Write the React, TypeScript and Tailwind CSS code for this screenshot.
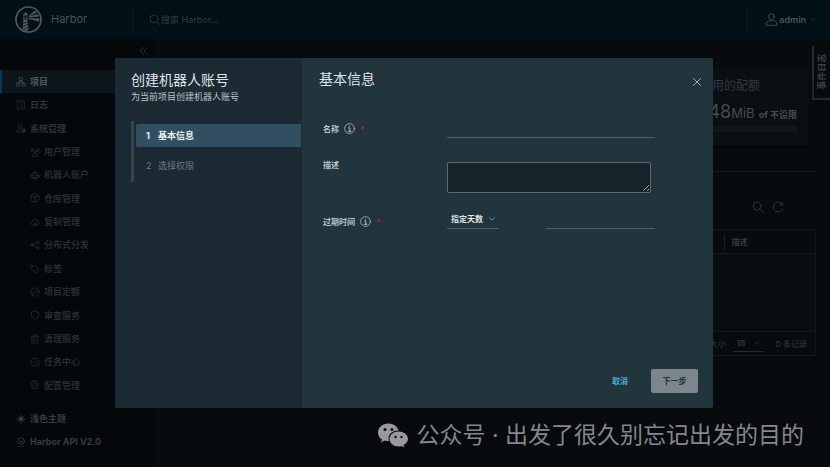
import type { ReactNode } from 'react';

const FONT = "font-['Inter','Noto_Sans_CJK_SC',sans-serif]";

type IconProps = { className?: string; children: ReactNode };

function Icon({ className = 'size-[10px]', children }: IconProps) {
  return (
    <svg
      viewBox="0 0 36 36"
      fill="none"
      stroke="currentColor"
      strokeWidth="2.4"
      strokeLinecap="round"
      strokeLinejoin="round"
      className={`shrink-0 ${className}`}
      aria-hidden="true"
    >
      {children}
    </svg>
  );
}

const SearchShape = (
  <>
    <circle cx="15" cy="15" r="12" />
    <path d="M24 24l10 10" />
  </>
);
const ChevronShape = <path d="M4 11l14 14 14-14" strokeWidth="4" />;

function Logo() {
  return (
    <svg viewBox="0 0 54 54" className="size-[27px] shrink-0" aria-hidden="true">
      <circle cx="27" cy="27" r="25" fill="none" stroke="#50585c" strokeWidth="3.4" />
      <path d="M16 17l5-5 5 5v2H16zM17 20h2v5h-2zM23 20h2v5h-2zM15 25h12v2H15zM17 28h8l2 20-6 2-6-3z" fill="#50585c" />
      <path d="M17 35l9-4M16 41l10-4M17 47l9-4" stroke="#02131a" strokeWidth="1.6" />
      <path d="M28 19l12-10 4 4-16 8zM28 21l18-5 2 5-20 2zM28 24l21 1-1 6-20-5z" fill="#50585c" />
    </svg>
  );
}

type NavItem = { label: string; icon: ReactNode; level: 0 | 1; active?: boolean };

const NAV: NavItem[] = [
  {
    label: '项目',
    level: 0,
    active: true,
    icon: <path d="M13 3h10v10H13zM3 23h10v10H3zM23 23h10v10H23zM18 13v5M8 23v-5h20v5" />,
  },
  {
    label: '日志',
    level: 0,
    icon: <path d="M6 3h24v30H6zM12 10h2M12 18h2M12 26h2M18 10h6M18 18h6M18 26h6" />,
  },
  {
    label: '系统管理',
    level: 0,
    icon: (
      <>
        <circle cx="15" cy="10" r="7" />
        <path d="M18 32H3v-6c3-5 8-6 14-5" />
        <circle cx="27" cy="27" r="5" strokeWidth="5" />
      </>
    ),
  },
  {
    label: '用户管理',
    level: 1,
    icon: (
      <>
        <circle cx="18" cy="16" r="5" />
        <circle cx="8" cy="9" r="4" />
        <circle cx="28" cy="9" r="4" />
        <path d="M9 32v-4c4-6 14-6 18 0v4zM2 22v-3c2-3 4-4 7-3M34 22v-3c-2-3-4-4-7-3" />
      </>
    ),
  },
  {
    label: '机器人账户',
    level: 1,
    icon: (
      <>
        <path d="M18 3v6M2 18v6M34 18v6M12 27h12" />
        <circle cx="18" cy="21" r="12" />
        <path d="M13 19v1M23 19v1" strokeWidth="4" />
      </>
    ),
  },
  { label: '仓库管理', level: 1, icon: <path d="M18 3l14 6v18l-14 6-14-6V9zM4 9l14 6 14-6M18 15v18" /> },
  {
    label: '复制管理',
    level: 1,
    icon: <path d="M24 29H9C1 29 1 18 9 18c0-12 17-14 19-2M34 18c1 6-3 11-9 11M17 23l5-4v8z" />,
  },
  {
    label: '分布式分发',
    level: 1,
    icon: (
      <>
        <circle cx="7" cy="18" r="4" />
        <circle cx="28" cy="8" r="4" />
        <circle cx="28" cy="28" r="4" />
        <path d="M11 16l13-6M11 20l13 6" />
      </>
    ),
  },
  {
    label: '标签',
    level: 1,
    icon: (
      <>
        <path d="M4 5h12l17 17-11 11L4 16z" />
        <path d="M10 11v0" strokeWidth="4" />
      </>
    ),
  },
  {
    label: '项目定额',
    level: 1,
    icon: (
      <>
        <circle cx="18" cy="18" r="15" />
        <path d="M9 29c0-8 4-12 10-12h13" />
      </>
    ),
  },
  { label: '审查服务', level: 1, icon: <path d="M18 3c4 3 8 4 13 4v10c0 8-6 13-13 16C11 30 5 25 5 17V7c5 0 9-1 13-4z" /> },
  { label: '清理服务', level: 1, icon: <path d="M4 8h28M13 8V3h10v5M7 8v25h22V8M14 14v13M22 14v13" /> },
  {
    label: '任务中心',
    level: 1,
    icon: <path d="M7 31C-2 20 4 5 18 5s20 15 11 26zM17 23l8-10M8 20h2" />,
  },
  {
    label: '配置管理',
    level: 1,
    icon: (
      <>
        <path d="M15 3h6l2 4 5-1 3 5-2 4 4 3-4 4 1 6-5 2-4-1-3 4-4-4-5 1-3-5 1-5-4-4 4-3-1-5 4-3 4 1z" />
        <circle cx="18" cy="18" r="6" />
      </>
    ),
  },
];

function Header() {
  return (
    <header className="flex h-[39px] shrink-0 items-center bg-[#010f16] text-[#4a5357]">
      <div className="flex w-[132px] items-center gap-[9px] pl-[15px]">
        <Logo />
        <span className="text-[11px]">Harbor</span>
      </div>
      <label className="flex h-[26px] flex-1 items-center border-l border-[#0b1a21] pl-4 text-[#323d42]">
        <Icon className="size-[12px]">{SearchShape}</Icon>
        <input
          aria-label="搜索"
          placeholder="搜索 Harbor..."
          className="w-32 bg-transparent text-[9px] outline-none placeholder:text-[#323d42]"
        />
      </label>
      <button className="flex h-[26px] items-center border-l border-[#0b1a21] pr-[14px] pl-[17px] text-[9px] font-semibold">
        <Icon className="mr-px size-[13px]">
          <circle cx="18" cy="10" r="8" />
          <path d="M3 33v-6c6-8 24-8 30 0v6z" />
        </Icon>
        admin
        <Icon className="ml-[5px] size-[5px]">{ChevronShape}</Icon>
      </button>
    </header>
  );
}

function Sidebar() {
  return (
    <nav className="flex w-[155px] shrink-0 flex-col bg-[#04080b] text-[9px] font-medium text-[#2d3336]">
      <div className="flex h-[31px] items-center justify-end px-[6px] pb-2">
        <button aria-label="收起" className="text-[#343b3f]">
          <Icon>
            <path d="M17 5L5 18l12 13M30 5L18 18l12 13" />
          </Icon>
        </button>
      </div>
      <div className="flex h-[327px] flex-col">
        {NAV.map((item) => (
          <a
            key={item.label}
            href="#"
            className={`flex flex-1 items-center gap-[4px] border-l-2 ${
              item.active ? 'border-[#06394e] bg-[#0c151a] text-[#50575b]' : 'border-transparent'
            } ${item.level === 0 ? 'pl-[14px] font-bold' : 'pl-[28px]'}`}
          >
            <Icon>{item.icon}</Icon>
            {item.label}
          </a>
        ))}
      </div>
      <div className="mt-[10px] flex flex-col font-bold text-[#363c3f]">
        <button className="flex h-[23px] items-center gap-[4px] pl-4">
          <Icon>
            <circle cx="18" cy="18" r="8" fill="currentColor" />
            <path d="M18 1v4M18 31v4M1 18h4M31 18h4M6 6l3 3M27 27l3 3M30 6l-3 3M9 27l-3 3" />
          </Icon>
          浅色主题
        </button>
        <a href="#" className="flex h-[23px] items-center gap-[4px] pl-4">
          <Icon>
            <circle cx="18" cy="15" r="12" />
            <path d="M9 34h18M8 9l9 9 9-8M12 24l6-6 9 5" />
          </Icon>
          Harbor API V2.0
        </a>
      </div>
    </nav>
  );
}

function ProjectPage() {
  return (
    <main className="flex min-w-0 flex-1 flex-col items-end bg-[#070b0e] pt-[31px] pr-[14px] text-[#343a3d]">
      <section className="mr-[7px] flex h-[78px] w-[220px] flex-col items-end rounded-sm border-b-2 border-[#020506] bg-[#090f12] px-3 pt-[7px]">
        <h2 className="w-[109px] text-[12px] leading-[18px]">已使用的配额</h2>
        <p className="mt-[6px] text-[9px] leading-[22px] font-bold whitespace-nowrap text-[#454b4e]">
          <span className="text-[18px] font-normal">48</span>
          <span className="mr-[2px] text-[13px] font-normal">MiB</span> of 不设限
        </p>
        <div className="h-[6px] w-full bg-[#10161a]" />
      </section>
      <div className="mt-[23px] w-full border-t border-[#11171a]" />
      <div className="mr-8 flex h-[57px] items-center gap-2 pt-[12px] text-[#343b3f]">
        <button aria-label="搜索记录">
          <Icon className="size-[12px]">{SearchShape}</Icon>
        </button>
        <button aria-label="刷新">
          <Icon className="size-[12px]">
            <path d="M31 11C22-3 4 4 4 18c0 16 21 20 27 6M32 3v9h-9" />
          </Icon>
        </button>
      </div>
      <table className="w-full border border-[#10161a] text-left text-[8px]">
        <thead>
          <tr className="h-6 border-b border-[#151b1e]">
            <th />
            <th className="w-[92px] pl-2 font-bold">
              <span className="-ml-2 border-l border-[#1a2023] py-[3px] pl-[7px]">描述</span>
            </th>
          </tr>
        </thead>
        <tbody>
          <tr className="h-[78px] bg-[#080d10]">
            <td colSpan={2} />
          </tr>
        </tbody>
        <tfoot>
          <tr className="h-6 border-t border-[#10161a]">
            <td colSpan={2}>
              <div className="flex items-center justify-end pr-2">
                <label htmlFor="page-size">页面大小</label>
                <div className="mr-3 ml-[7px] flex w-[31px] items-center border-b border-[#252b2e] pr-1">
                  <select
                    id="page-size"
                    className="h-4 min-w-0 flex-1 appearance-none bg-transparent pl-1 font-bold outline-none"
                  >
                    <option>15</option>
                  </select>
                  <Icon className="size-[6px]">{ChevronShape}</Icon>
                </div>
                <span>0 条记录</span>
              </div>
            </td>
          </tr>
        </tfoot>
      </table>
    </main>
  );
}

function InfoIcon() {
  return (
    <Icon className="size-[11px]">
      <circle cx="18" cy="18" r="16" />
      <path d="M15 16h4v11M14 27h9M18 9v1" strokeWidth="3" />
    </Icon>
  );
}

function RobotDialog() {
  return (
    <div
      role="dialog"
      aria-labelledby="wizard-title"
      className="flex min-h-[350px] w-[598px] max-w-full overflow-hidden rounded-[2px] bg-[#22343c] text-[#b9c3c8]"
    >
      <aside className="w-[187px] shrink-0 bg-[#1b2a33] pt-3 pl-4">
        <h1 id="wizard-title" className="text-[14px] leading-[19px] text-[#dfe4e6]">
          创建机器人账号
        </h1>
        <p className="text-[9px] leading-[15px]">为当前项目创建机器人账号</p>
        <ol className="mt-[17px] flex flex-col gap-[7px] border-l-[3px] border-[#34444a] text-[9px] leading-[23px]">
          <li className="mt-[3px] mr-px ml-[2px] flex rounded-l-[2px] bg-[#324f62] pl-[10px] font-bold text-[#f0f3f4]">
            <span className="w-3">1</span>基本信息
          </li>
          <li className="mb-[5px] ml-[2px] flex pl-[10px] text-[#6f7c82]">
            <span className="w-3">2</span>选择权限
          </li>
        </ol>
      </aside>

      <form className="flex min-w-0 flex-1 flex-col px-[15px] pt-[11px]" onSubmit={(e) => e.preventDefault()}>
        <div className="flex items-start justify-between pl-[2px]">
          <h2 className="text-[14px] leading-[19px] text-[#dfe4e6]">基本信息</h2>
          <button type="button" aria-label="关闭" className="mt-2 mr-[-4px]">
            <Icon className="size-[10px]">
              <path d="M5 5l26 26M31 5L5 31" strokeWidth="3" />
            </Icon>
          </button>
        </div>

        <div className="mt-8 grid grid-cols-[124px_minmax(0,208px)] pl-[6px] text-[8px] font-bold">
          <label htmlFor="name" className="flex h-[18px] items-center gap-[5px] leading-4">
            名称 <InfoIcon /> <span className="text-[#b8260c]">*</span>
          </label>
          <input id="name" className="h-[18px] border-b border-[#4d5f67] bg-transparent px-1 outline-none" />

          <label htmlFor="description" className="mt-[19px] leading-4">
            描述
          </label>
          <textarea
            id="description"
            className="mt-6 h-[31px] w-[204px] resize rounded-[2px] border border-[#5c6c73] bg-[#18242c] px-1 outline-none"
          />

          <label htmlFor="expiry" className="mt-5 flex h-[18px] items-center gap-[5px] leading-4">
            过期时间 <InfoIcon /> <span className="text-[#b8260c]">*</span>
          </label>
          <div className="mt-[18px] flex items-start justify-between">
            <div className="flex h-[18px] w-[52px] items-center border-b border-[#4d5f67] pr-1">
              <select
                id="expiry"
                className="h-4 min-w-0 flex-1 appearance-none bg-transparent pl-1 text-[#dfe4e6] outline-none"
              >
                <option>指定天数</option>
              </select>
              <Icon className="size-[6px]">{ChevronShape}</Icon>
            </div>
            <input
              aria-label="天数"
              className="h-[18px] w-[109px] border-b border-[#4d5f67] bg-transparent px-1 outline-none"
            />
          </div>
        </div>

        <div className="mt-auto flex justify-end gap-[11px] pb-[15px] text-[8px] font-bold">
          <button type="button" className="h-6 px-3 text-[#48aedb]">
            取消
          </button>
          <button type="submit" className="h-6 w-[47px] rounded-[2px] bg-[#7b878d] text-[#24343c]">
            下一步
          </button>
        </div>
      </form>
    </div>
  );
}

function Watermark() {
  return (
    <div className="absolute right-[26px] bottom-[16px] flex items-center gap-2 text-[23px] leading-8 whitespace-nowrap text-[#858789]">
      <svg viewBox="0 0 60 50" className="h-[25px] w-[30px] text-[#98999b]" aria-hidden="true">
        <path d="M21 1C9 1 0 9 0 19c0 6 3 11 8 14l-2 6 7-4c3 1 6 1 9 1-4-12 6-21 19-21C39 7 31 1 21 1z" fill="currentColor" />
        <path d="M41 17c-10 0-18 7-18 15s8 15 18 15c2 0 4 0 6-1l6 3-2-5c5-3 9-7 9-12 0-8-9-15-19-15z" fill="currentColor" />
        <g fill="#070b0e">
          <circle cx="14" cy="13" r="3" />
          <circle cx="28" cy="13" r="3" />
          <circle cx="35" cy="28" r="2.4" />
          <circle cx="47" cy="28" r="2.4" />
        </g>
      </svg>
      <span>公众号 · 出发了很久别忘记出发的目的</span>
    </div>
  );
}

export default function App() {
  return (
    <div className={`relative flex min-h-screen flex-col overflow-hidden bg-[#070b0e] ${FONT}`}>
      <Header />
      <div className="flex flex-1">
        <Sidebar />
        <ProjectPage />
      </div>
      <button className="absolute top-[46px] right-0 flex h-[54px] w-[18px] items-center justify-center rounded-bl-[2px] border-b-2 border-l-2 border-[#252a2d] pr-px text-[9px] font-bold text-[#393f42]">
        <span className="-rotate-90 whitespace-nowrap">事件日志</span>
      </button>
      <div className="absolute inset-0 flex items-center justify-center pr-0.5 pb-0.5">
        <RobotDialog />
      </div>
      <Watermark />
    </div>
  );
}
